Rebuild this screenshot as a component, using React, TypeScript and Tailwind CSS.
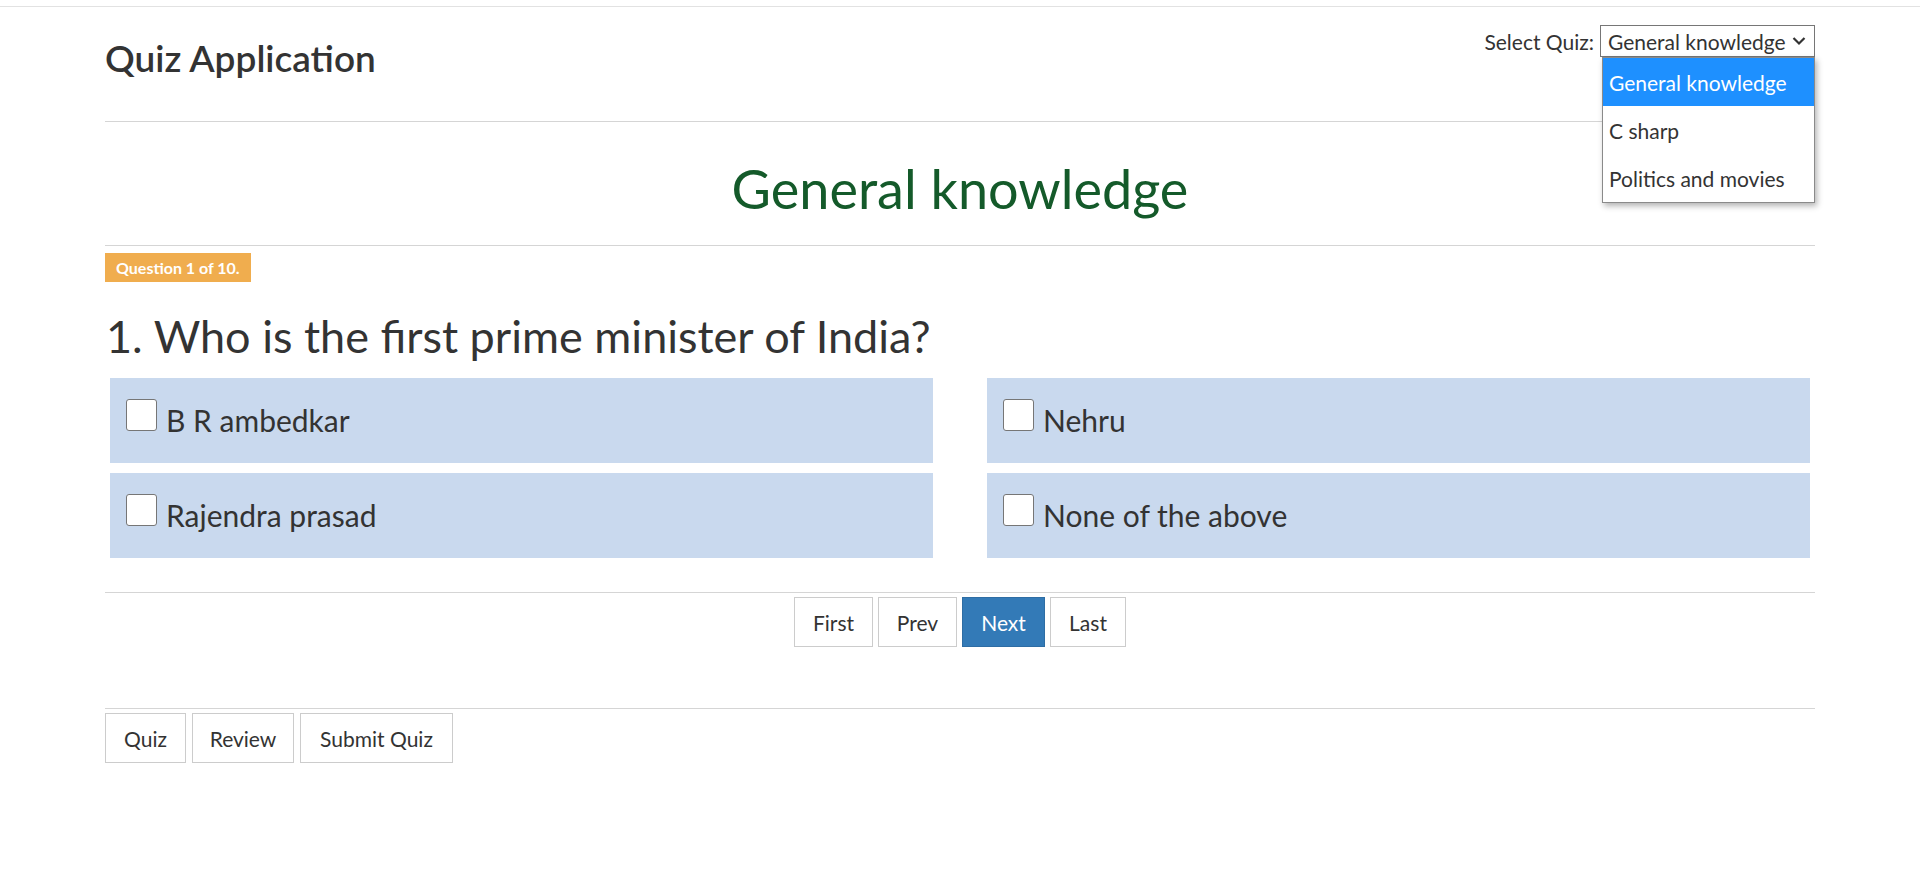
import React, { useState } from 'react'

const options = ['B R ambedkar', 'Nehru', 'Rajendra prasad', 'None of the above']
const quizzes = ['General knowledge', 'C sharp', 'Politics and movies']

const App = () => {
  const [selected, setSelected] = useState(0)

  return (
    <div className="min-h-screen bg-white font-['Lato','Noto_Sans',sans-serif] text-[#333]">
      {/* top rule */}
      <div className="h-[7px] border-b border-[#e2e2e2]"></div>

      <div className="mx-[105px]">
        {/* Header */}
        <div className="flex h-[114px] items-start justify-between">
          <h3 className="mt-[32px] text-[37px] font-semibold leading-none">Quiz Application</h3>
          <div className="relative mt-[18px] flex items-center">
            <span className="mr-[6px] text-[21px] leading-none">Select Quiz:</span>
            <div className="flex h-[32px] w-[215px] items-center justify-between border border-[#767676] bg-white pl-[7px] pr-[8px] text-[21px] leading-none">
              <span>{quizzes[selected]}</span>
              <svg className="h-[10px] w-[14px]" viewBox="0 0 14 10" fill="none" stroke="#333" strokeWidth={2.2}>
                <path d="M1.5 2l5.5 5.5L12.5 2" />
              </svg>
            </div>
            {/* open dropdown list */}
            <div className="absolute right-0 top-[32px] z-10 w-[213px] border border-[#8a8a8a] bg-white shadow-[2px_3px_6px_rgba(0,0,0,0.3)]">
              {quizzes.map((q, i) => (
                <div
                  key={q}
                  onClick={() => setSelected(i)}
                  className={`flex h-[48px] items-center pl-[6px] text-[21px] leading-none ${i === selected ? 'bg-[#1e90ff] text-white' : 'text-[#333]'}`}
                >
                  {q}
                </div>
              ))}
            </div>
          </div>
        </div>

        <div className="border-t border-[#d5d5d5]"></div>

        {/* Quiz title */}
        <h1 className="pb-[29px] pt-[40px] text-center text-[54px] font-normal leading-none text-[#145a2a]">
          {quizzes[selected]}
        </h1>

        <div className="border-t border-[#d5d5d5]"></div>

        {/* Question */}
        <div className="mt-[7px]">
          <span className="inline-flex h-[29px] items-center bg-[#f0ad4e] px-[11px] text-[16px] font-bold leading-none text-white">
            Question 1 of 10.
          </span>
        </div>
        <h2 className="mb-[19px] ml-[1px] mt-[32px] text-[45px] font-normal leading-none">
          1. Who is the first prime minister of India?
        </h2>

        <div className="grid grid-cols-2 gap-x-[54px] gap-y-[10px] px-[5px]">
          {options.map((o) => (
            <label key={o} className="flex h-[85px] items-start bg-[#c9d9ee] pl-[16px] pt-[21px]">
              <span className="h-[32px] w-[31px] shrink-0 rounded-[3px] border border-[#767676] bg-white"></span>
              <span className="ml-[9px] mt-[6px] text-[30px] leading-none">{o}</span>
            </label>
          ))}
        </div>

        <div className="mt-[34px] border-t border-[#d5d5d5]"></div>

        {/* Pagination */}
        <div className="mt-[4px] flex justify-center gap-[5px]">
          <button className="h-[50px] w-[79px] border border-[#ccc] bg-white pt-[1px] text-[21px] text-[#333]">First</button>
          <button className="h-[50px] w-[79px] border border-[#ccc] bg-white pt-[1px] text-[21px] text-[#333]">Prev</button>
          <button className="h-[50px] w-[83px] border border-[#2e6da4] bg-[#337ab7] pt-[1px] text-[21px] text-white">Next</button>
          <button className="h-[50px] w-[76px] border border-[#ccc] bg-white pt-[1px] text-[21px] text-[#333]">Last</button>
        </div>

        <div className="mt-[61px] border-t border-[#d5d5d5]"></div>

        {/* Footer buttons */}
        <div className="mt-[4px] flex gap-[6px]">
          <button className="h-[50px] w-[81px] border border-[#ccc] bg-white pt-[1px] text-[21px] text-[#333]">Quiz</button>
          <button className="h-[50px] w-[102px] border border-[#ccc] bg-white pt-[1px] text-[21px] text-[#333]">Review</button>
          <button className="h-[50px] w-[153px] border border-[#ccc] bg-white pt-[1px] text-[21px] text-[#333]">Submit Quiz</button>
        </div>
      </div>
    </div>
  )
}

export default App
